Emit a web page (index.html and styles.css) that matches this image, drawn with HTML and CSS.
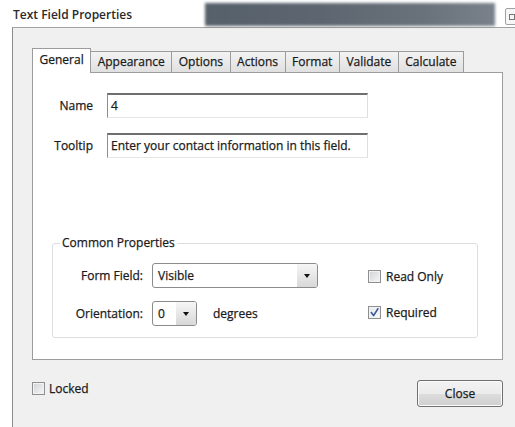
FILE: index.html
```html
<!DOCTYPE html>
<html lang="en">
<head>
<meta charset="utf-8">
<title>Text Field Properties</title>
<link rel="stylesheet" href="styles.css">
</head>
<body>
<div class="window">
  <header class="titlebar">
    <h1 class="title">Text Field Properties</h1>
    <div class="caption-blur"></div>
    <div class="caption-btn"><span class="caption-glyph"></span></div>
  </header>

  <main class="dialog">
    <nav class="tabs">
      <span class="tab active">General</span>
      <span class="tab">Appearance</span>
      <span class="tab">Options</span>
      <span class="tab">Actions</span>
      <span class="tab">Format</span>
      <span class="tab">Validate</span>
      <span class="tab">Calculate</span>
    </nav>

    <section class="panel">
      <div class="fields">
        <span class="field-label">Name</span>
        <div class="textbox">4</div>
        <span class="field-label">Tooltip</span>
        <div class="textbox">Enter your contact information in this field.</div>
      </div>

      <fieldset class="group">
        <legend class="group-title">Common Properties</legend>
        <div class="group-body">
          <div class="props">
            <span class="prop-label">Form Field:</span>
            <div class="dropdown wide">
              <span class="dropdown-value">Visible</span>
              <span class="dropdown-arrow"><span class="tri"></span></span>
            </div>
            <span class="prop-label">Orientation:</span>
            <div class="orient">
              <div class="dropdown narrow">
                <span class="dropdown-value">0</span>
                <span class="dropdown-arrow"><span class="tri"></span></span>
              </div>
              <span>degrees</span>
            </div>
          </div>
          <div class="checks">
            <label class="check"><span class="box"></span>Read Only</label>
            <label class="check"><span class="box checked"><svg viewBox="0 0 11 11" width="11" height="11"><path d="M2.3 5.6 L4.6 8.6 L8.9 1.8" fill="none" stroke="#3d5a9e" stroke-width="1.6" stroke-linecap="round" stroke-linejoin="round"/></svg></span>Required</label>
          </div>
        </div>
      </fieldset>
    </section>

    <footer class="footer">
      <label class="check locked"><span class="box"></span>Locked</label>
      <button class="btn" type="button">Close</button>
    </footer>
  </main>
</div>
</body>
</html>
```

FILE: styles.css
```css
* { box-sizing: border-box; }

html, body { margin: 0; }

body {
  width: 515px;
  height: 427px;
  overflow: hidden;
  background: #fff;
  font-family: "Open Sans", "Noto Sans", sans-serif;
  font-size: 12px;
  color: #1a1a1a;
  -webkit-text-stroke: 0.25px #1a1a1a;
}

.window {
  display: flex;
  flex-direction: column;
  height: 427px;
}

/* caption strip */
.titlebar {
  flex: none;
  height: 27px;
  display: flex;
  align-items: flex-start;
}

.title {
  margin: 0;
  padding: 7px 0 0 13px;
  font-size: 12px;
  line-height: 16px;
  font-weight: 600;
  color: #2a2a2a;
  -webkit-text-stroke: 0;
}

.caption-blur {
  margin: 3px 0 0 auto;
  width: 290px;
  height: 23px;
  background: linear-gradient(90deg, #56606a 0%, #5d6670 40%, #69727a 75%, #79818a 100%);
  filter: blur(1.5px);
}

.caption-btn {
  margin: 8px -6px 0 10px;
  width: 16px;
  height: 17px;
  border: 1px solid #9ca2a6;
  border-radius: 2px;
  background: #f6f6f6;
  display: flex;
  align-items: center;
  padding-left: 3px;
}

.caption-glyph {
  width: 6px;
  height: 6px;
  border: 1px solid #777;
}

/* dialog body */
.dialog {
  flex: 1;
  margin-left: 12px;
  border-left: 1px solid #8c8c8c;
  border-top: 1px solid #a3a3a3;
  background: #f0f0f0;
  padding: 20px 12px 0 19px;
  display: flex;
  flex-direction: column;
}

/* tab strip */
.tabs {
  display: flex;
  align-items: flex-end;
  height: 24px;
}

.tab {
  height: 21px;
  padding: 0 6.5px;
  margin-right: -1px;
  border: 1px solid #9c9c9c;
  border-bottom: none;
  background: linear-gradient(#f3f3f3, #e0e0e0);
  line-height: 19px;
  white-space: nowrap;
}

.tab.active {
  position: relative;
  z-index: 1;
  height: 25px;
  margin-bottom: -1px;
  background: #fff;
  line-height: 22px;
  padding-bottom: 2px;
}

/* tab page */
.panel {
  flex: none;
  height: 288px;
  border: 1px solid #9c9c9c;
  background: #fff;
  padding: 20px 24px 21px 19px;
  display: flex;
  flex-direction: column;
}

.fields {
  display: grid;
  grid-template-columns: 41px 261px;
  column-gap: 14px;
  row-gap: 15px;
  align-items: center;
}

.field-label {
  text-align: right;
  white-space: nowrap;
}

.textbox {
  height: 25px;
  border: 1px solid;
  border-color: #6f6f6f #dedede #e6e6e6 #8e8e8e;
  border-top-width: 2px;
  padding-left: 3px;
  line-height: 22px;
  background: #fff;
  white-space: nowrap;
}

/* group box */
.group {
  margin: auto 0 0 0;
  padding: 0;
  min-width: 0;
  border: 1px solid #dcdfe2;
  border-radius: 3px;
}

.group-title {
  margin-left: 7px;
  padding: 0 2px;
  line-height: 16px;
}

.group-body {
  display: flex;
  gap: 50px;
  padding: 12px 0 11px 17px;
}

.props {
  display: grid;
  grid-template-columns: 73px auto;
  column-gap: 9px;
  row-gap: 13px;
  align-items: center;
}

.prop-label {
  text-align: right;
  white-space: nowrap;
}

.dropdown {
  height: 25px;
  display: flex;
  border: 1px solid #8b8b8b;
  border-radius: 3px;
  background: #fff;
  overflow: hidden;
}

.dropdown.wide { width: 166px; }
.dropdown.narrow { width: 45px; }

.dropdown-value {
  flex: 1;
  padding-left: 5px;
  line-height: 23px;
}

.dropdown-arrow {
  width: 20px;
  display: flex;
  align-items: center;
  justify-content: center;
  background: linear-gradient(#f6f6f6, #d8d8d8);
}

.tri {
  width: 0;
  height: 0;
  border-top: 4px solid #111;
  border-left: 3.5px solid transparent;
  border-right: 3.5px solid transparent;
}

.orient {
  display: flex;
  align-items: center;
  gap: 16px;
}

/* check boxes */
.checks {
  display: flex;
  flex-direction: column;
  gap: 19px;
  padding-top: 5px;
}

.check {
  display: flex;
  align-items: center;
  gap: 5px;
  white-space: nowrap;
}

.box {
  width: 13px;
  height: 13px;
  flex: none;
  border: 1px solid #8e8f8f;
  box-shadow: inset 0 0 0 1px #f2f2f2;
  background: linear-gradient(135deg, #cfd2d5, #f7f7f7);
  display: flex;
  align-items: center;
  justify-content: center;
}

.box.checked {
  background: linear-gradient(135deg, #e4e7ec, #fafbfc);
}

/* bottom row */
.footer {
  display: flex;
  justify-content: space-between;
  align-items: flex-start;
  margin-top: 20px;
}

.locked {
  margin-top: 0;
  gap: 4px;
}

.btn {
  width: 86px;
  height: 27px;
  border: 1px solid #707070;
  border-radius: 3px;
  background: linear-gradient(#f3f3f3 0%, #ebebeb 50%, #dddddd 51%, #cfcfcf 100%);
  box-shadow: inset 0 0 0 1px #fbfbfb;
  font: inherit;
  color: inherit;
  padding: 0;
}
```
